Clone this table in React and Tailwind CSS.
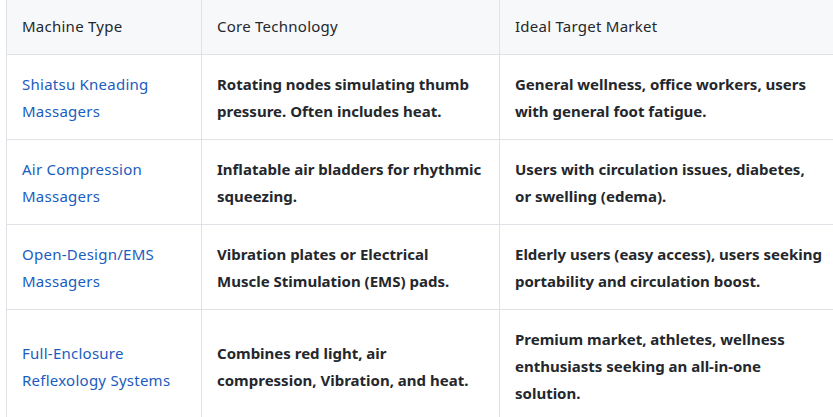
import React from "react";

const rows = [
  ["Shiatsu Kneading Massagers", "Rotating nodes simulating thumb pressure. Often includes heat.", "General wellness, office workers, users with general foot fatigue."],
  ["Air Compression Massagers", "Inflatable air bladders for rhythmic squeezing.", "Users with circulation issues, diabetes, or swelling (edema)."],
  ["Open-Design/EMS Massagers", "Vibration plates or Electrical Muscle Stimulation (EMS) pads.", "Elderly users (easy access), users seeking portability and circulation boost."],
  ["Full-Enclosure Reflexology Systems", "Combines red light, air compression, Vibration, and heat.", "Premium market, athletes, wellness enthusiasts seeking an all-in-one solution."],
];

export default function App() {
  return (
    <div className="w-[833px] h-[417px] overflow-hidden bg-white" style={{ fontFamily: '"Noto Sans", "Open Sans", sans-serif' }}>
      <table className="ml-[6px] -mt-[4px] border-collapse table-fixed w-[1000px] text-[15px] leading-[27px] text-[#24272c]">
        <colgroup>
          <col className="w-[195px]" />
          <col className="w-[298px]" />
          <col />
        </colgroup>
        <thead>
          <tr className="bg-[#f6f8fa]">
            <th className="border border-[#dfe2e7] px-[15px] pt-[16px] pb-[14px] text-left font-normal align-middle tracking-[0.25px]">Machine Type</th>
            <th className="border border-[#dfe2e7] px-[15px] pt-[16px] pb-[14px] text-left font-normal align-middle tracking-[0.25px]">Core Technology</th>
            <th className="border border-[#dfe2e7] px-[15px] pt-[16px] pb-[14px] text-left font-normal align-middle tracking-[0.25px]">Ideal Target Market</th>
          </tr>
        </thead>
        <tbody>
          {rows.map((r, i) => (
            <tr key={i}>
              <td className="border border-[#dfe2e7] px-[15px] pt-[16px] pb-[14px] align-middle text-[#1a5cbf] tracking-[0.25px]">{r[0]}</td>
              <td className="border border-[#dfe2e7] px-[15px] pt-[16px] pb-[14px] align-middle font-bold">{r[1]}</td>
              <td className="border border-[#dfe2e7] px-[15px] pt-[16px] pb-[14px] align-middle font-bold">
                <div className="w-[307px]">{r[2]}</div>
              </td>
            </tr>
          ))}
        </tbody>
      </table>
    </div>
  );
}
